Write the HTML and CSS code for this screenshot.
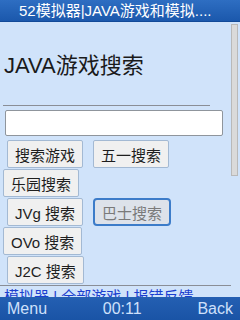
FILE: index.html
```html
<!DOCTYPE html>
<html>
<head>
    <link rel="stylesheet" href="styles.css">
</head>
<body>
    <div class="titlebar">52模拟器|JAVA游戏和模拟....</div>

    <div class="content">
        <div class="scrollbar"></div>

        <h1>JAVA游戏搜索</h1>
        <div class="rule"></div>

        <!-- поле поиска -->
        <input type="text" class="search" value="" />

        <div class="row first">
            <button class="btn">搜索游戏</button>
            <button class="btn">五一搜索</button>
        </div>
        <div class="row flush">
            <button class="btn">乐园搜索</button>
        </div>
        <div class="row">
            <button class="btn">JVg 搜索</button>
            <button class="btn focused">巴士搜索</button>
        </div>
        <div class="row flush">
            <button class="btn">OVo 搜索</button>
        </div>
        <div class="row">
            <button class="btn">J2C 搜索</button>
        </div>

        <div class="rule wide"></div>
        <p class="links">模拟器 | 全部游戏 | 报错反馈</p>
    </div>

    <div class="softkeys">
        <span>Menu</span>
        <span>00:11</span>
        <span>Back</span>
    </div>
</body>
</html>
```

FILE: styles.css
```css
html, body {
  margin: 0;
  padding: 0;
}

body {
  width: 240px;
  height: 320px;
  overflow: hidden;
  display: flex;
  flex-direction: column;
  font-family: "Liberation Sans", "Noto Sans CJK SC", sans-serif;
  background-color: #d0e3fa;
}

.titlebar {
  height: 22px;
  line-height: 22px;
  padding-left: 19px;
  font-size: 15px;
  color: #fff;
  white-space: nowrap;
  overflow: hidden;
  background: linear-gradient(#2e6ec2, #1b58ac);
  border-bottom: 1px solid #124a98;
  box-sizing: border-box;
}

.content {
  flex: 1;
  position: relative;
  overflow: hidden;
}

/* полоса прокрутки справа */
.scrollbar {
  position: absolute;
  top: 2px;
  right: 2px;
  width: 7px;
  height: 152px;
  background-color: #dadada;
  border: 1px solid #b9b9b9;
  box-sizing: border-box;
}

h1 {
  margin: 33px 0 0 4px;
  font-size: 22px;
  line-height: 22px;
  font-weight: normal;
  color: #1a1a1a;
}

.rule {
  margin: 28px 0 0 3px;
  width: 207px;
  border-top: 1px solid #8a8e96;
}

.rule.wide {
  margin: 1px 0 0 0;
  width: 231px;
}

.search {
  display: block;
  margin: 4px 0 0 5px;
  width: 218px;
  height: 26px;
  box-sizing: border-box;
  border: 1px solid #8f959c;
  border-radius: 2px;
  background-color: #fff;
  padding: 0;
}

.row {
  display: flex;
  gap: 10px;
  padding-left: 7px;
  margin-top: 1px;
}

.row.first {
  margin-top: 4px;
}

.row.flush {
  padding-left: 3px;
}

.btn {
  height: 28px;
  padding: 0 7px;
  font-family: "Liberation Sans", "Noto Sans CJK SC", sans-serif;
  font-size: 15px;
  color: #1e1e1e;
  background-color: #f0f0f0;
  border: 1px solid #a3b9d3;
  border-radius: 2px;
  box-sizing: border-box;
}

.btn.focused {
  border: 2px solid #3c7cc9;
  border-radius: 4px;
  background-color: #dde2ea;
  color: #7a7a7a;
  padding: 0 7px;
}

.links {
  margin: 2px 0 0 4px;
  font-size: 15px;
  line-height: 18px;
  color: #1b3fcf;
  white-space: nowrap;
}

.softkeys {
  height: 23px;
  display: flex;
  justify-content: space-between;
  align-items: center;
  padding: 0 7px;
  font-size: 16px;
  color: #cfe0fb;
  background: linear-gradient(#245fb2, #1a54a6);
}
```
